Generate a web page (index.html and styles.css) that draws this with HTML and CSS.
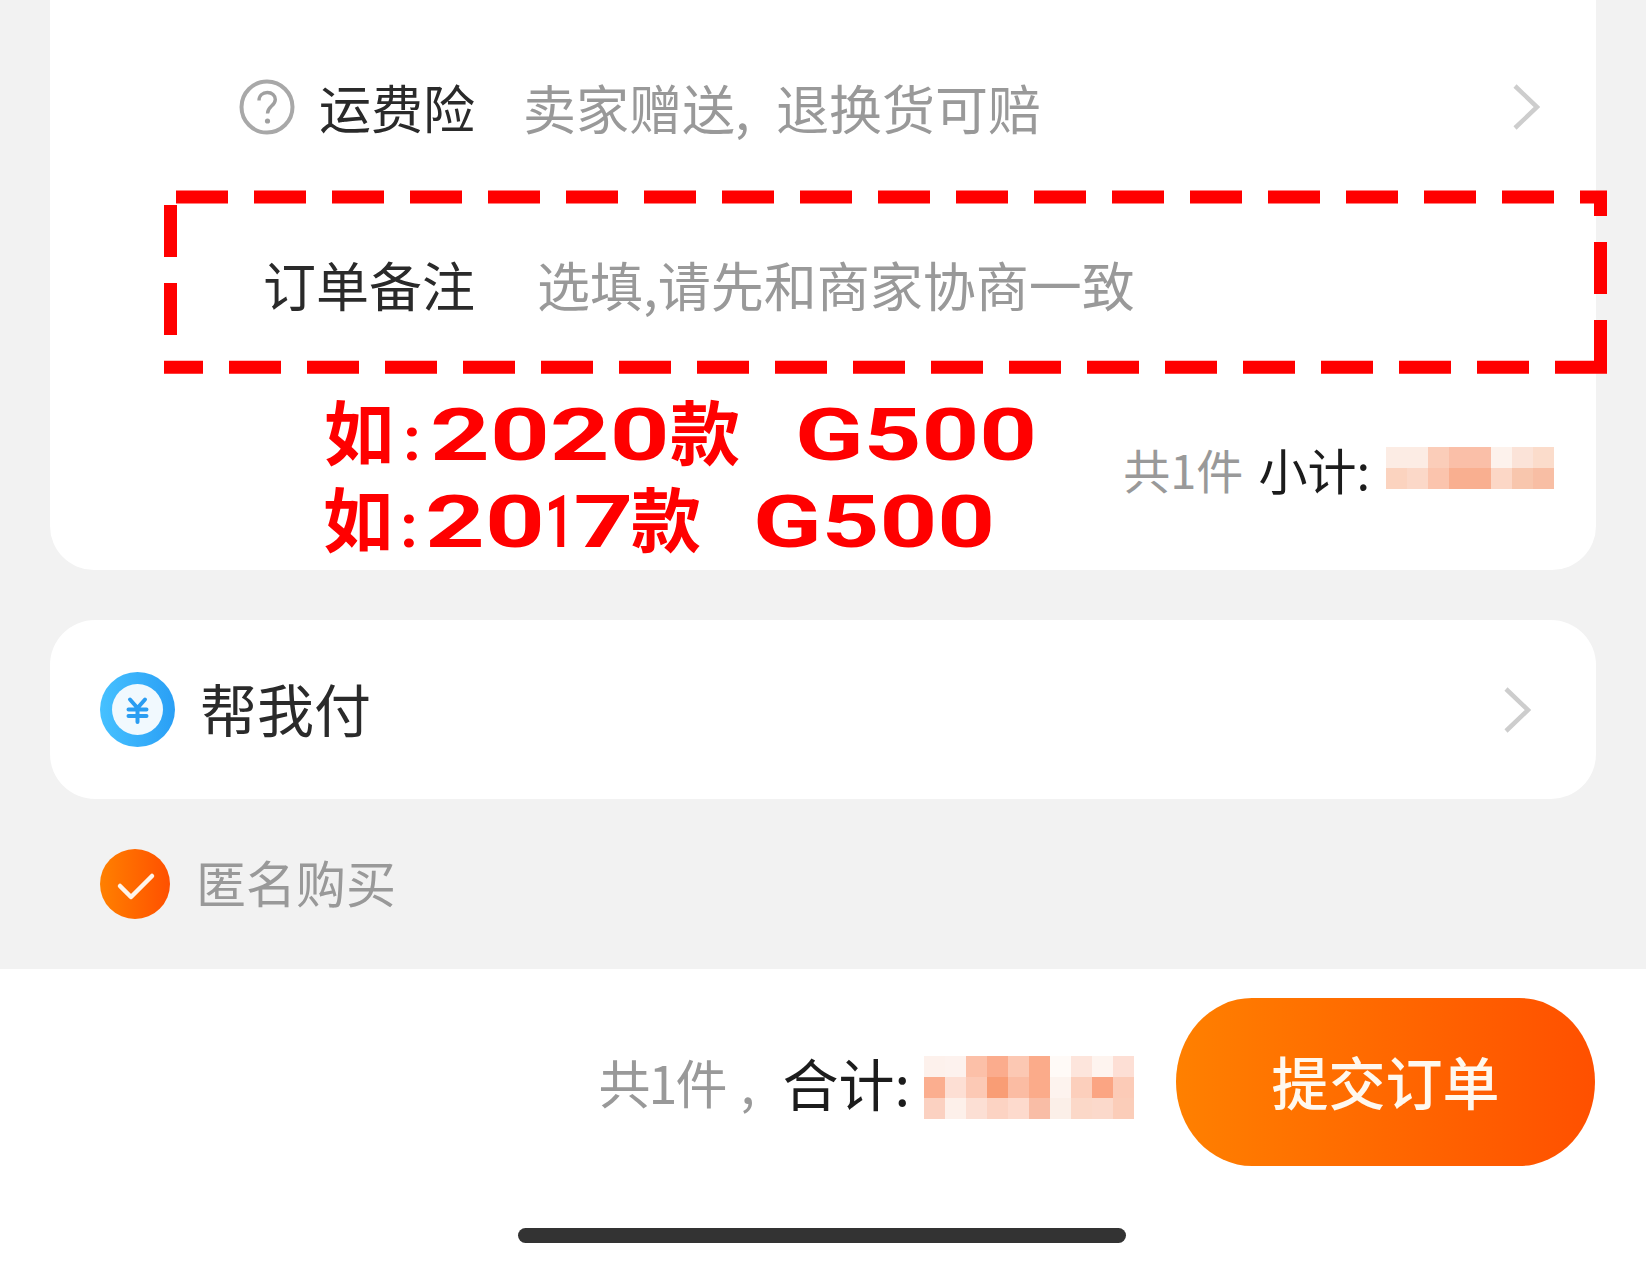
FILE: index.html
```html
<!DOCTYPE html>
<html lang="zh-CN">
<head>
<meta charset="utf-8">
<title>确认订单</title>
<link rel="stylesheet" href="styles.css">
</head>
<body>
<div class="page">
  <main class="content">
    <section class="card card-order">
      <div class="row row-insurance">
        <div class="label label-insurance">
          <svg class="icon-help" viewBox="0 0 56 56" aria-hidden="true">
            <circle cx="28" cy="28" r="25.500" fill="none" stroke="#a8a8a8" stroke-width="4"/>
            <path d="M20 21.500c0-5 3.600-8 8.300-8 4.700 0 8 3 8 7 0 6.500-7.800 6.800-7.800 14" fill="none" stroke="#a0a0a0" stroke-width="3.400"/>
            <circle cx="28.500" cy="42" r="2.600" fill="#a0a0a0"/>
          </svg>
          <span>运费险</span>
        </div>
        <div class="value value-insurance">卖家赠送<span class="comma">,</span>退换货可赔</div>
        <svg class="chevron" viewBox="0 0 28 46" aria-hidden="true"><path d="M3 2l22 21L3 44" fill="none" stroke="#cdcdcd" stroke-width="4.500"/></svg>
      </div>
      <div class="row row-note">
        <div class="label"><span>订单备注</span></div>
        <div class="value value-note">选填,请先和商家协商一致</div>
      </div>
      <div class="row row-subtotal">
        <span class="muted">共1件</span>
        <span class="strong subtotal-label">小计:</span>
        <div class="mosaic mosaic-small">
          <i style="background:#fcece4"></i><i style="background:#fcece4"></i><i style="background:#fbcdb9"></i><i style="background:#fabfa8"></i><i style="background:#fabfa8"></i><i style="background:#fdf2ec"></i><i style="background:#fbe3d8"></i><i style="background:#fbdccb"></i>
          <i style="background:#fbd3bf"></i><i style="background:#fbd8c8"></i><i style="background:#fbc4ad"></i><i style="background:#f9af90"></i><i style="background:#f9af90"></i><i style="background:#fcd7c6"></i><i style="background:#f8c6ad"></i><i style="background:#f8bea4"></i>
        </div>
      </div>
    </section>

    <section class="card card-pay">
      <svg class="icon-pay" viewBox="0 0 75 75" aria-hidden="true">
        <defs>
          <linearGradient id="payGrad" x1="0" x2="1" y1="0" y2="0">
            <stop offset="0" stop-color="#46c1ff"/>
            <stop offset="1" stop-color="#2a9ff5"/>
          </linearGradient>
        </defs>
        <circle cx="37.500" cy="37.500" r="37.500" fill="url(#payGrad)"/>
        <circle cx="37.500" cy="37.500" r="25.500" fill="#f1f9fe"/>
        <path d="M30 27.500l7.500 8.500 7.500-8.500M28.500 37.500h18M28.500 44h18M37.500 36.500v13.500" fill="none" stroke="#2b9df2" stroke-width="4" stroke-linecap="round" stroke-linejoin="round"/>
      </svg>
      <span class="pay-title">帮我付</span>
      <svg class="chevron" viewBox="0 0 28 46" aria-hidden="true"><path d="M3 2l22 21L3 44" fill="none" stroke="#cdcdcd" stroke-width="4.500"/></svg>
    </section>

    <div class="anon">
      <svg class="icon-check" viewBox="0 0 70 70" aria-hidden="true">
        <defs>
          <linearGradient id="checkGrad" x1="0" x2="1" y1="0" y2="0">
            <stop offset="0" stop-color="#ff8000"/>
            <stop offset="1" stop-color="#ff5000"/>
          </linearGradient>
        </defs>
        <circle cx="35" cy="35" r="35" fill="url(#checkGrad)"/>
        <path d="M20 37l11 11 21-21" fill="none" stroke="#fff4ea" stroke-width="4.500" stroke-linecap="round" stroke-linejoin="round"/>
      </svg>
      <span class="anon-text">匿名购买</span>
    </div>
  </main>

  <footer class="bar">
    <div class="bar-row">
      <span class="muted total-count">共1件</span>
      <span class="muted total-comma">,</span>
      <span class="strong total-label">合计:</span>
      <div class="mosaic mosaic-large">
        <i style="background:#fdf1ec"></i><i style="background:#fdf2ee"></i><i style="background:#fcc0a8"></i><i style="background:#fbac8d"></i><i style="background:#fcc8b3"></i><i style="background:#fbab8a"></i><i style="background:#fffaf7"></i><i style="background:#fde5dc"></i><i style="background:#fef4ef"></i><i style="background:#fddfd5"></i>
        <i style="background:#fbae8f"></i><i style="background:#fddfd4"></i><i style="background:#fcc9b5"></i><i style="background:#f99d75"></i><i style="background:#fbbca3"></i><i style="background:#fbab8a"></i><i style="background:#fdf3ee"></i><i style="background:#fccfbc"></i><i style="background:#fba583"></i><i style="background:#fccbb7"></i>
        <i style="background:#fbd1c1"></i><i style="background:#fdf0ea"></i><i style="background:#fcdfd4"></i><i style="background:#fcd3c3"></i><i style="background:#fddacd"></i><i style="background:#f9bda6"></i><i style="background:#fbefe8"></i><i style="background:#fbd8c8"></i><i style="background:#fbd9cb"></i><i style="background:#fbcdb9"></i>
      </div>
      <button class="submit" type="button">提交订单</button>
    </div>
    <div class="home-indicator"></div>
  </footer>

  <svg class="note-frame" viewBox="0 0 1646 1262" aria-hidden="true">
    <line class="frame-dash" x1="176" y1="197" x2="1607" y2="197"/>
    <line class="frame-dash" x1="1607" y1="367.250" x2="164" y2="367.250"/>
    <path class="frame-side" d="M1600.500 203V216M1600.500 242V294M1600.500 320V361M170.500 205V257M170.500 283V335"/>
  </svg>

  <div class="annotation">
    <div class="anno-line">
      <span class="anno-cjk">如</span><span class="anno-colon">:</span><span class="anno-num"><span class="anno-scale">2020</span></span><span class="anno-cjk anno-kuan">款</span><span class="anno-num anno-model"><span class="anno-scale">G500</span></span>
    </div>
    <div class="anno-line anno-second">
      <span class="anno-cjk">如</span><span class="anno-colon">:</span><span class="anno-num anno-num-short"><span class="anno-scale">20<span class="digit-one"><span class="digit-one-glyph">1</span></span>7</span></span><span class="anno-cjk anno-kuan">款</span><span class="anno-num anno-model"><span class="anno-scale">G500</span></span>
    </div>
  </div>
</div>
</body>
</html>
```
FILE: styles.css
```css
* { box-sizing: border-box; }
html, body { margin: 0; padding: 0; }
body {
  font-family: "Noto Sans CJK SC", "Liberation Sans", sans-serif;
  background: #f2f2f2;
}
.page {
  position: relative;
  width: 1646px;
  height: 1262px;
  overflow: hidden;
  display: flex;
  flex-direction: column;
}
.content {
  height: 969px;
  padding: 0 50px;
  display: flex;
  flex-direction: column;
}
.card { background: #fff; }
.card-order {
  height: 570px;
  padding: 21px 0 9px;
  border-radius: 0 0 44px 44px;
  display: flex;
  flex-direction: column;
}
.row { display: flex; align-items: center; }
.row-insurance { height: 172px; padding-right: 56px; }
.row-note { height: 182px; }
.row-subtotal {
  height: 186px;
  justify-content: flex-end;
  padding-right: 42px;
  font-size: 47px;
  line-height: 1;
}
.label {
  width: 425px;
  display: flex;
  justify-content: flex-end;
  align-items: center;
  gap: 24px;
  font-size: 53px;
  line-height: 1;
  color: #2a2a2a;
}
.label-insurance { font-size: 52px; }
.icon-help { width: 56px; height: 56px; flex: none; }
.value { font-size: 53px; line-height: 1; color: #999; white-space: nowrap; }
.value-insurance { margin-left: 48px; }
.comma { display: inline-block; width: 41px; }
.value-note { margin-left: 62px; }
.chevron { width: 28px; height: 46px; margin-left: auto; flex: none; }
.muted { color: #999; }
.strong { color: #1c1c1c; }
.subtotal-label { margin: 0 16px 0 15px; font-size: 49px; }
.mosaic { display: grid; flex: none; }
.mosaic i { display: block; width: 21px; height: 21px; }
.mosaic-small { grid-template-columns: repeat(8, 21px); }
.mosaic-large { grid-template-columns: repeat(10, 21px); margin-top: 10px; }

.card-pay {
  height: 179px;
  margin-top: 50px;
  padding: 0 65px 0 50px;
  border-radius: 45px;
  display: flex;
  align-items: center;
}
.icon-pay { width: 75px; height: 75px; flex: none; }
.pay-title {
  margin-left: 25px;
  padding-bottom: 4px;
  font-size: 57px;
  line-height: 1;
  color: #2a2a2a;
}
.anon {
  height: 70px;
  margin-top: 50px;
  padding-left: 50px;
  display: flex;
  align-items: center;
  gap: 26px;
  font-size: 50px;
  line-height: 1;
  color: #999;
}
.anon-text { padding-bottom: 6px; }
.icon-check { width: 70px; height: 70px; flex: none; }

.bar {
  flex: 1;
  background: #fff;
  padding-top: 29px;
  display: flex;
  flex-direction: column;
}
.bar-row {
  height: 168px;
  padding-right: 51px;
  display: flex;
  align-items: center;
  justify-content: flex-end;
  font-size: 56px;
  line-height: 1;
}
.total-count { font-size: 52px; letter-spacing: -2px; }
.total-comma { width: 57px; padding-left: 15px; font-size: 52px; }
.total-label { margin-right: 14px; }
.submit {
  width: 419px;
  height: 168px;
  margin-left: 42px;
  padding: 0 0 4px;
  border: 0;
  border-radius: 76px / 84px;
  background: linear-gradient(90deg, #ff8000, #ff5000);
  color: #fff8ee;
  font: 500 57px/1 "Noto Sans CJK SC", "Liberation Sans", sans-serif;
}
.home-indicator {
  width: 608px;
  height: 15px;
  margin: 62px 0 0 518px;
  border-radius: 8px;
  background: #333;
}

.note-frame {
  position: absolute;
  inset: 0;
  width: 1646px;
  height: 1262px;
  pointer-events: none;
}
.frame-dash {
  stroke: #f00;
  stroke-width: 13px;
  stroke-dasharray: 52 26;
}
.frame-side {
  fill: none;
  stroke: #f00;
  stroke-width: 13px;
}

.annotation {
  position: absolute;
  left: 324px;
  top: 392px;
  font-family: "Roboto", "Noto Sans CJK SC", sans-serif;
  font-weight: 700;
  font-size: 73px;
  line-height: 87px;
  color: #f00;
  white-space: nowrap;
}
.anno-line { display: flex; align-items: baseline; height: 87px; }
.anno-second { margin-left: -1px; }
.anno-cjk { font-size: 70px; flex: none; width: 70px; }
.anno-colon { flex: none; width: 36px; font-size: 62px; text-align: center; }
.anno-second .anno-colon { width: 32px; }
.anno-num { flex: none; width: 231px; }
.anno-num-short { width: 197px; }
.anno-scale {
  display: inline-block;
  transform: scaleX(1.43);
  transform-origin: 0 50%;
}
.anno-kuan { margin-left: 9px; }
.anno-model { margin-left: 55px; width: 233px; }
.anno-second .anno-model { margin-left: 52px; }
.anno-model .anno-scale { transform: scaleX(1.38); }
.digit-one { display: inline-block; width: 20px; }
.digit-one-glyph {
  display: inline-block;
  transform: scaleX(.47);
  transform-origin: 0 50%;
}
```
